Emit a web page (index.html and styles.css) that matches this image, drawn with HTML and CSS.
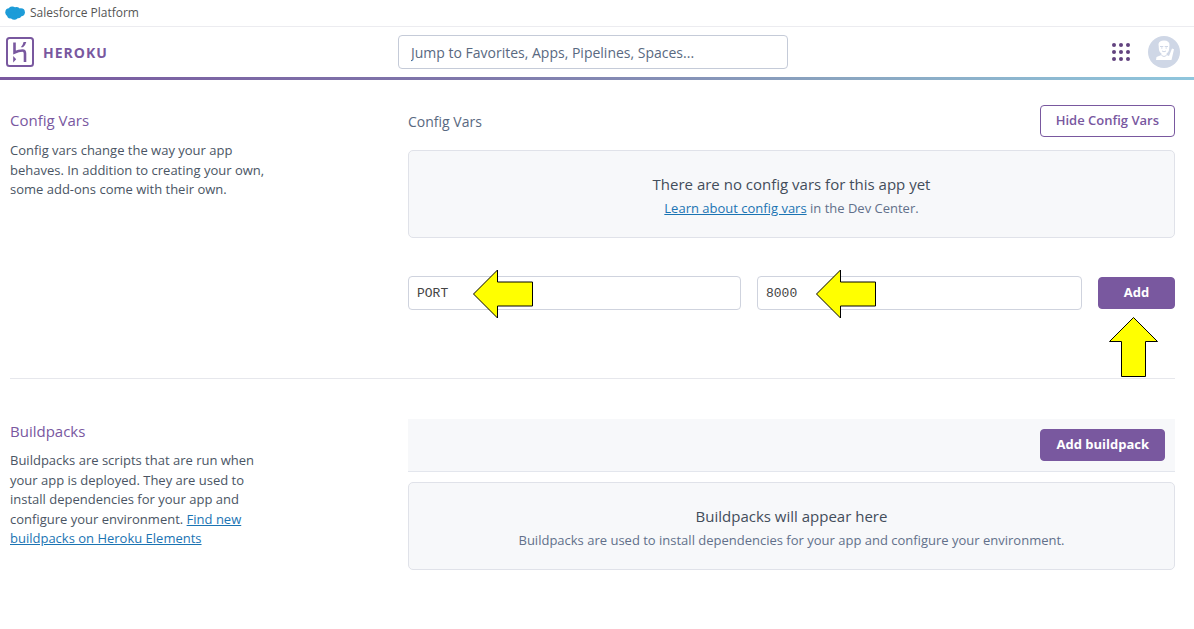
FILE: index.html
```html
<!DOCTYPE html>
<html lang="en">
<head>
<meta charset="utf-8">
<title>Heroku – Config Vars</title>
<link rel="stylesheet" href="styles.css">
</head>
<body>
<div class="platform">
  <svg class="cloud" width="20" height="14" viewBox="0 0 20 14" aria-hidden="true"><g fill="#1d9cd8"><circle cx="4.3" cy="6.3" r="4"/><circle cx="7.2" cy="4.2" r="3.8"/><circle cx="11.5" cy="4.2" r="3.3"/><circle cx="15.8" cy="6.3" r="4.1"/><circle cx="5.2" cy="9.3" r="3.1"/><circle cx="9.3" cy="10" r="3.8"/><circle cx="13" cy="9" r="3.3"/></g></svg>
  <span>Salesforce Platform</span>
</div>
<header class="header">
  <a class="brand" href="#">
    <svg width="28" height="30" viewBox="0 0 28 30" fill="none" stroke="#79589f" aria-hidden="true"><rect x="1" y="1" width="26" height="28" rx="2.5" stroke-width="2"/><path d="M8.5 5.500V15.500C11 14.300 14 13.500 16.500 13.500C18.500 13.500 19 14.800 19 16.500V25" stroke-width="2.600"/><path d="M7.200 19V25.500L10.200 22.200Z" fill="#79589f" stroke="none"/><path d="M17 10.300Q19.600 8 20.300 5H17.600Q17 7.800 14.800 10.300Z" fill="#79589f" stroke="none"/></svg>
    <span class="wordmark">HEROKU</span>
  </a>
  <input class="search" type="search" aria-label="Jump to" placeholder="Jump to Favorites, Apps, Pipelines, Spaces...">
  <div class="tools">
    <button class="icon-button" type="button" aria-label="App switcher">
      <svg width="18" height="18" viewBox="0 0 18 18" fill="#62437f"><circle cx="2" cy="2" r="2"/><circle cx="9" cy="2" r="2"/><circle cx="16" cy="2" r="2"/><circle cx="2" cy="9" r="2"/><circle cx="9" cy="9" r="2"/><circle cx="16" cy="9" r="2"/><circle cx="2" cy="16" r="2"/><circle cx="9" cy="16" r="2"/><circle cx="16" cy="16" r="2"/></svg>
    </button>
    <button class="icon-button" type="button" aria-label="Account">
      <svg width="32" height="32" viewBox="0 0 32 32"><circle cx="16" cy="16" r="16" fill="#cfd7e6"/><g fill="#fff"><path d="M10.500 8Q11 4.500 16 4.500Q21.500 4.500 21.500 9L21 14Q20 18 16 18Q12 18 11 14Z"/><path d="M13.500 16H18.500V19L21 20L24 12.500L26 13.200L23.500 24H8L8.500 21L13.500 19Z"/></g><path d="M12 10.500H15.300M16.700 10.500H20M13 12H14.500M17.500 12H19" stroke="#cfd7e6" stroke-width="1.200"/><path d="M14 15Q16 16.500 18 15M13.500 19.500Q16 21.500 18.500 19.500" stroke="#cfd7e6" fill="none"/></svg>
    </button>
  </div>
</header>
<main class="main">
  <section class="section vars">
    <div class="about">
      <h2>Config Vars</h2>
      <p>Config vars change the way your app behaves. In addition to creating your own, some add-ons come with their own.</p>
    </div>
    <div class="content">
      <div class="content-head">
        <h3>Config Vars</h3>
        <button class="button outline" type="button">Hide Config Vars</button>
      </div>
      <div class="empty">
        <p class="empty-title">There are no config vars for this app yet</p>
        <p class="empty-text"><a href="#">Learn about config vars</a> in the Dev Center.</p>
      </div>
      <form class="var-form">
        <div class="field key">
          <input type="text" aria-label="Key" value="PORT">
          <svg class="arrow left" width="62" height="52" viewBox="0 0 62 52" aria-hidden="true"><path d="M1.500 26L25.500 2V14H60.500V38H25.500V50Z"/></svg>
        </div>
        <div class="field value">
          <input type="text" aria-label="Value" value="8000">
          <svg class="arrow left" width="62" height="52" viewBox="0 0 62 52" aria-hidden="true"><path d="M1.500 26L25.500 2V14H60.500V38H25.500V50Z"/></svg>
        </div>
        <div class="submit">
          <button class="button solid" type="button">Add</button>
          <svg class="arrow up" width="52" height="62" viewBox="0 0 52 62" aria-hidden="true"><path d="M25.500 1.500L49.500 25.500H37.500V60.500H13.500V25.500H1.500Z"/></svg>
        </div>
      </form>
    </div>
  </section>
  <section class="section packs">
    <div class="about">
      <h2>Buildpacks</h2>
      <p>Buildpacks are scripts that are run when your app is deployed. They are used to install dependencies for your app and configure your environment. <a href="#">Find new buildpacks on Heroku Elements</a></p>
    </div>
    <div class="content">
      <div class="toolbar"><button class="button solid" type="button">Add buildpack</button></div>
      <div class="empty">
        <p class="empty-title">Buildpacks will appear here</p>
        <p class="empty-text">Buildpacks are used to install dependencies for your app and configure your environment.</p>
      </div>
    </div>
  </section>
</main>
</body>
</html>
```
FILE: styles.css
```css
* { box-sizing: border-box; }
body {
  margin: 0;
  background: #fff;
  color: #4a5564;
  font: 13px/1.5 "Open Sans", "Noto Sans", sans-serif;
}
h2, h3, p { margin: 0; font-weight: 400; }
a { color: #1b74b3; }
button, input { font: inherit; }
.platform {
  display: flex;
  align-items: center;
  gap: 5px;
  height: 27px;
  padding: 0 5px;
  border-bottom: 1px solid #ececf0;
  font-size: 12px;
  color: #555;
}
.header {
  display: grid;
  grid-template-columns: 1fr 390px 1fr;
  align-items: center;
  height: 53px;
  padding: 0 14px 0 6px;
  border-bottom: 3px solid;
  border-image: linear-gradient(90deg, #79589f, #7f78ab 40%, #8aa5c0 70%, #8fc6dd) 1;
}
.brand {
  display: flex;
  align-items: center;
  gap: 9px;
  color: #79589f;
  text-decoration: none;
}
.wordmark { font-size: 14px; font-weight: 700; letter-spacing: 1px; }
.search {
  width: 100%;
  height: 34px;
  padding: 0 12px;
  border: 1px solid #c5cbd8;
  border-radius: 4px;
  background: #fff;
  font-size: 14px;
}
.search::placeholder { color: #596981; opacity: 1; }
.tools { display: flex; align-items: center; justify-content: flex-end; gap: 18px; }
.icon-button { display: flex; padding: 0; border: 0; background: none; }
.main { padding: 0 19px 0 10px; }
.section { display: grid; grid-template-columns: 398px 1fr; }
.vars { padding: 25px 0 68px; border-bottom: 1px solid #e6e7ec; }
.packs { padding: 40px 0; }
.about { padding-top: 3px; }
.about p { max-width: 260px; margin-top: 9px; }
.packs .about { padding-top: 0; }
h2 { color: #79589f; font-size: 15px; line-height: 24px; }
h3 { color: #596981; font-size: 14px; }
.content-head { display: flex; align-items: center; justify-content: space-between; }
.button {
  height: 32px;
  padding: 0 15px;
  border: 1px solid #79589f;
  border-radius: 4px;
  font-weight: 600;
}
.outline { background: #fff; color: #79589f; }
.solid { background: #79589f; color: #fff; font-weight: 700; }
.empty {
  margin-top: 13px;
  padding: 21px 16px 17px;
  border: 1px solid #e0e2e9;
  border-radius: 5px;
  background: #f7f8fa;
  text-align: center;
}
.empty-title { color: #434d5b; font-size: 15px; line-height: 24px; }
.empty-text { color: #62708a; font-size: 13px; line-height: 24px; }
.var-form {
  display: grid;
  grid-template-columns: 333fr 325fr 77px;
  align-items: center;
  gap: 16px;
  margin-top: 38px;
}
.field, .submit { position: relative; }
.field input {
  display: block;
  width: 100%;
  height: 34px;
  padding: 0 8px;
  border: 1px solid #cfd3de;
  border-radius: 4px;
  color: #444;
  font: 13px "Liberation Mono", monospace;
}
.submit .button { display: block; width: 100%; }
.arrow { position: absolute; fill: #ff0; stroke: #000; }
.arrow.left { top: -8px; left: 64px; }
.value .arrow.left { left: 58px; }
.arrow.up { top: 39px; left: 10px; }
.toolbar {
  display: flex;
  justify-content: flex-end;
  padding: 10px;
  border-bottom: 1px solid #e3e6ed;
  background: #f7f8fa;
}
.packs .about p { margin-top: 8px; }
.packs .empty { margin-top: 10px; }
```
